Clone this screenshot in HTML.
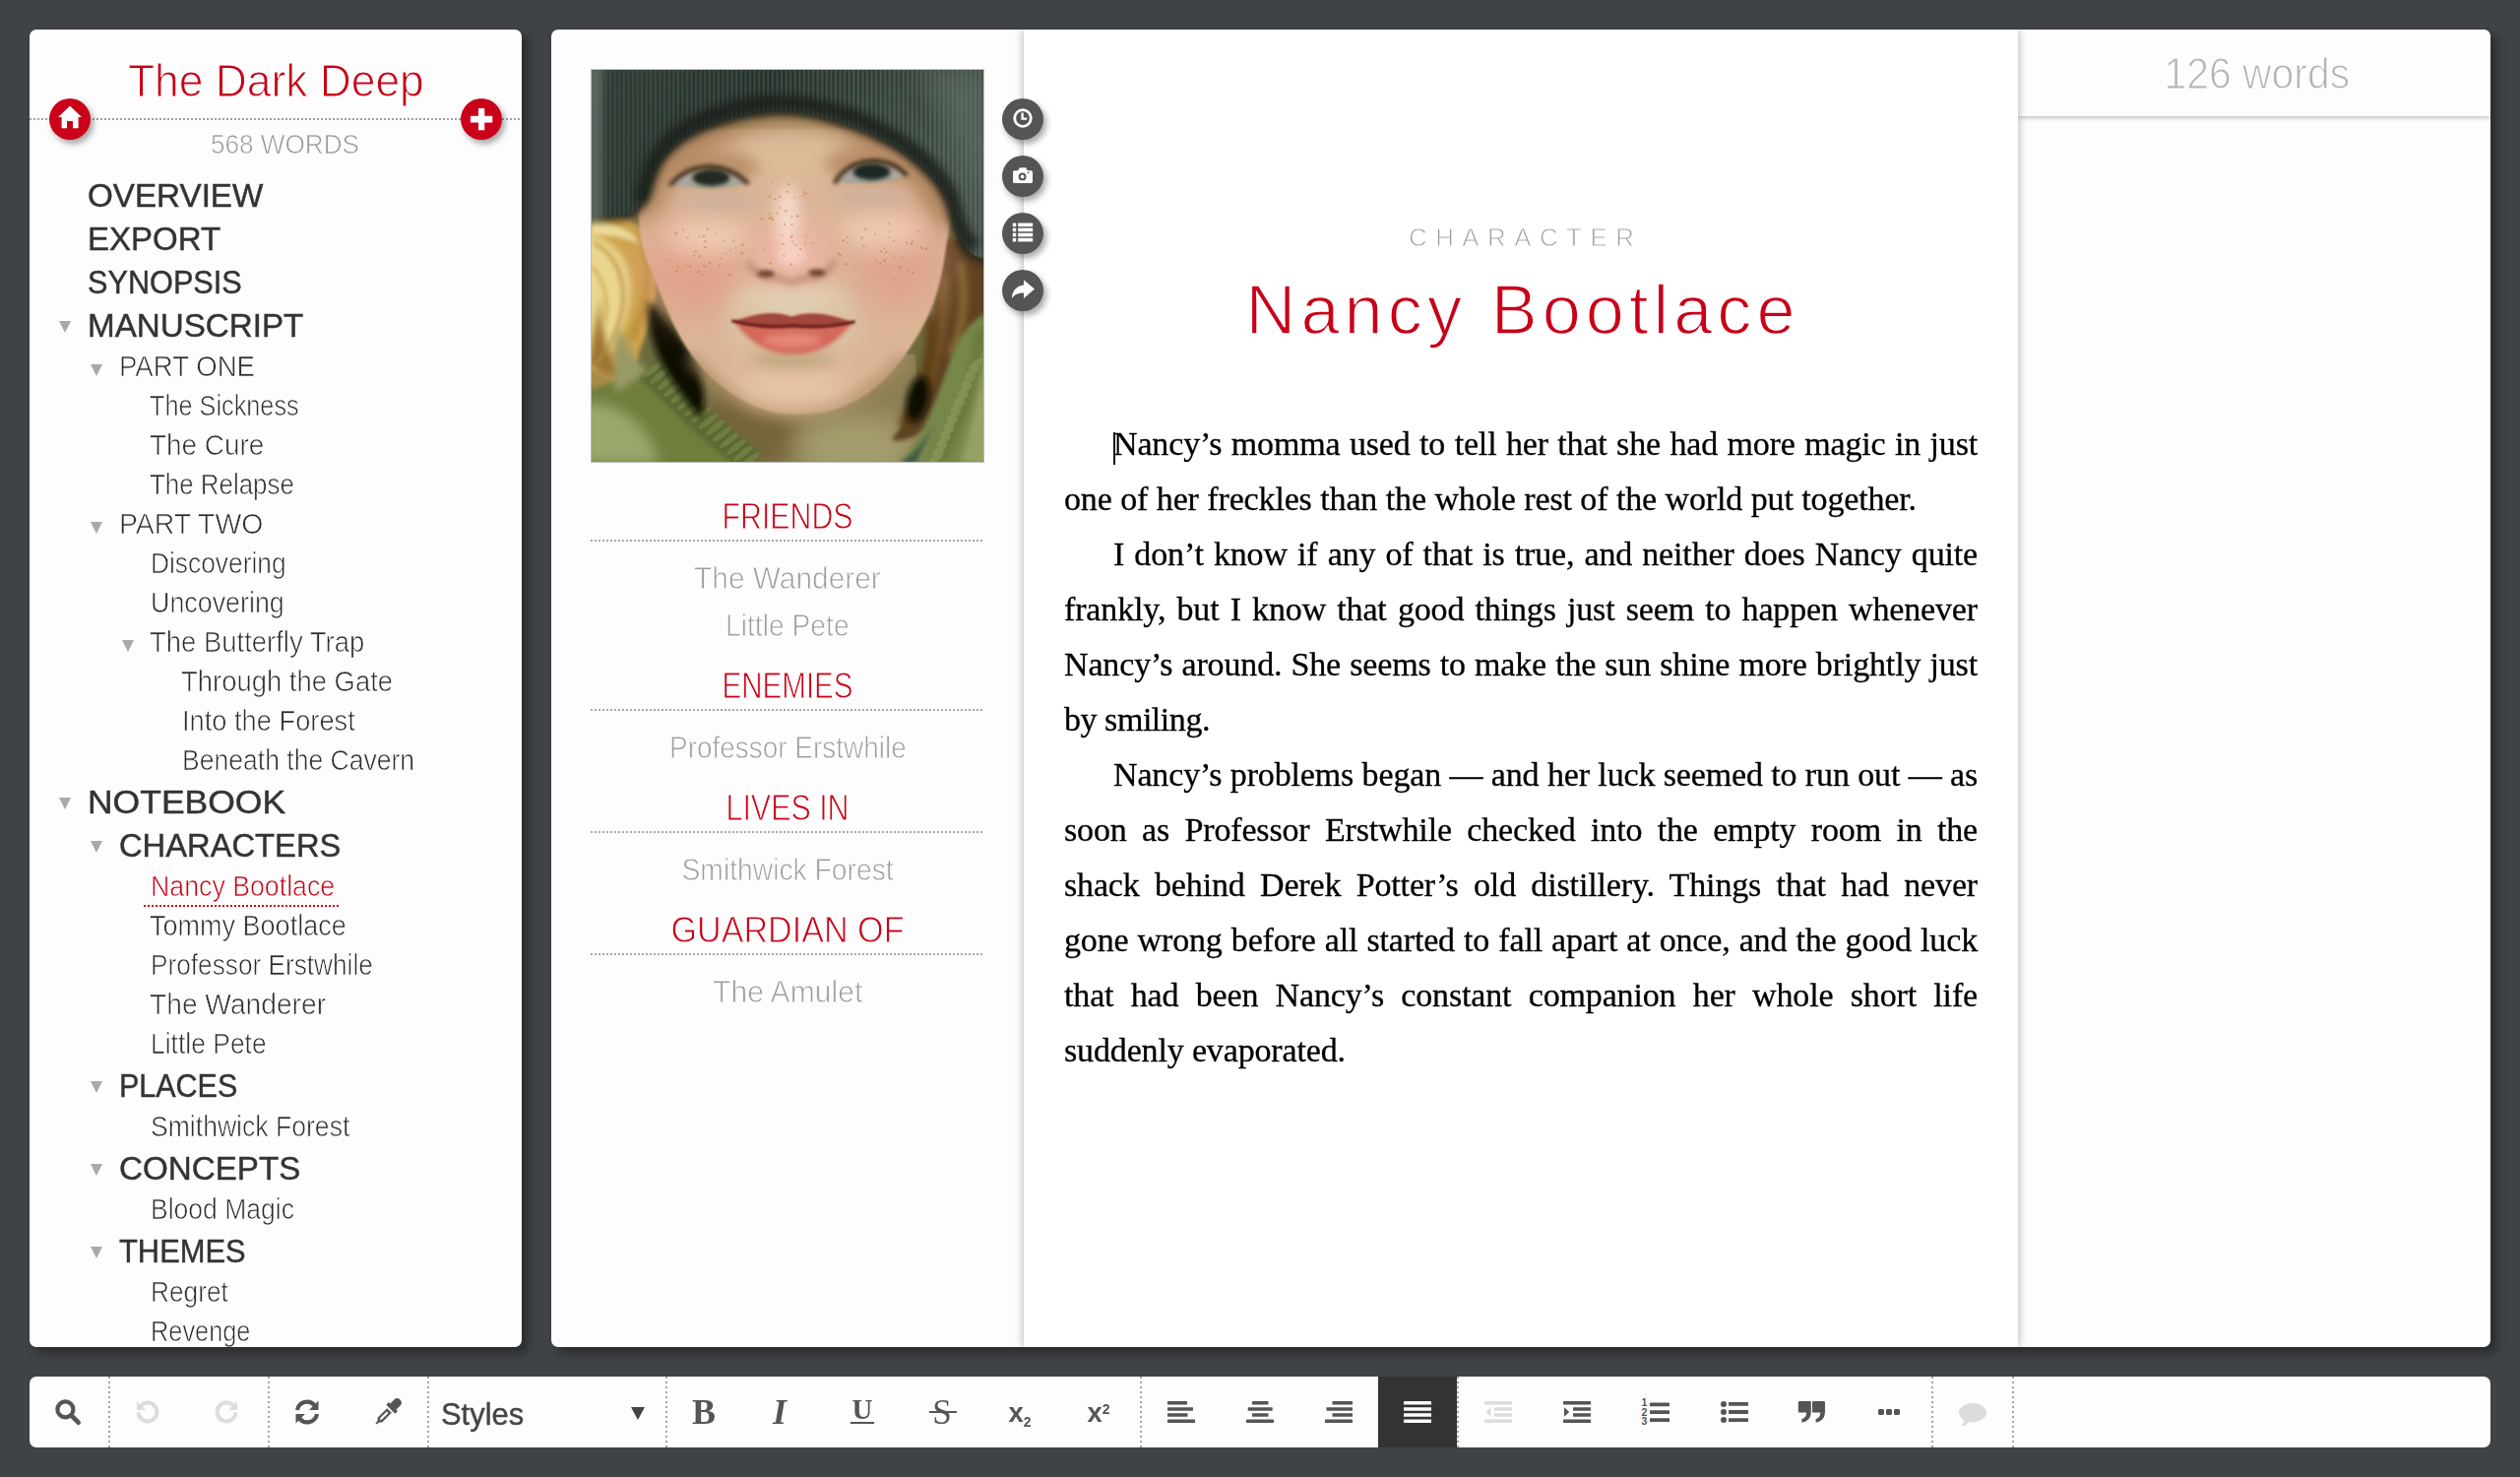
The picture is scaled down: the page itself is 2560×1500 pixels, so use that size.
<!DOCTYPE html>
<html lang="en">
<head>
<meta charset="utf-8">
<title>The Dark Deep — Nancy Bootlace</title>
<style>

html,body{margin:0;padding:0}
html{overflow:hidden;background:#3f4246}
body{width:2560px;height:1500px;background:#3f4246;position:relative;overflow:hidden;
 font-family:"Liberation Sans",sans-serif;color:#333;-webkit-font-smoothing:antialiased}
ul,li,h1,h2,h3,p{margin:0;padding:0;list-style:none;font-weight:normal}
a{display:block;text-decoration:none;color:inherit}
i{font-style:normal}
.panel{position:absolute;background:#fdfdfd;border-radius:7px;box-shadow:6px 6px 10px rgba(0,0,0,.34)}
.f{display:inline-block;white-space:nowrap;transform:scaleX(var(--k));transform-origin:0 50%}
.f.c{transform-origin:50% 50%}
.thin{-webkit-text-stroke:.7px #fdfdfd}
#sidebar h1 .thin{-webkit-text-stroke-width:1.1px}
#card h3 .thin{-webkit-text-stroke-width:.9px}
#card li .thin{-webkit-text-stroke-width:.8px}
#info .thin{-webkit-text-stroke-width:1.2px}

/* ---------- sidebar ---------- */
#sidebar{left:30px;top:30px;width:500px;height:1338px;overflow:hidden}
#sidebar h1{position:absolute;left:0;top:28px;width:500px;text-align:center;font-size:47px;line-height:47px;color:#c80018}
#sidebar h1 .f{transform-origin:50% 50%}
#sidebar .rule{position:absolute;left:0;top:90px;width:500px;height:2px;
 background:repeating-linear-gradient(90deg,#a0a0a0 0 2px,transparent 2px 4px)}
#sidebar .count{position:absolute;left:184px;top:104px;font-size:27px;line-height:27px;color:#999}
.rb{position:absolute;z-index:3;width:42px;height:42px;border-radius:50%;box-shadow:3px 4px 6px rgba(0,0,0,.35)}
.rb svg{position:absolute;left:0;top:0;width:42px;height:42px}
.rb.red{background:#cb0019}
.rb.dark{background:#555}
.rb.dark svg{top:-1px}
.tree{position:absolute;left:0;top:147px;width:500px}
.tree li{position:relative;box-sizing:border-box;white-space:nowrap}
.tree li.h{height:44px;line-height:44px;font-size:33px;color:#333;-webkit-text-stroke:.45px #333}
.tree li.l{height:40px;line-height:38px;font-size:29.6px;color:#2c2c2c}
.tree .tri{position:absolute;top:17px;width:0;height:0;border-left:6.5px solid transparent;border-right:6.5px solid transparent;border-top:12px solid #a9a9a9}
.tree .sel{color:#c80018}
.tree .selrule{position:absolute;left:116px;top:38px;width:198px;height:2px;
 background:repeating-linear-gradient(90deg,#c80018 0 2px,transparent 2px 4px)}

/* ---------- document panel ---------- */
#doc{left:560px;top:30px;width:1970px;height:1338px;overflow:hidden}
#card{position:absolute;left:0;top:0;width:480px;height:1338px}
#card .photo{position:absolute;left:40px;top:40px;width:398px;height:398px;border:1px solid #b9bdb6;background:#7a7f5c}
#card .photo svg{display:block;width:398px;height:398px}
#card .rel{position:absolute;left:40px;top:469px;width:400px;text-align:center}
#card h3{height:50px;line-height:51px;font-size:36px;color:#c80018}
#card ul{padding:12px 0;border-top:0;position:relative}
#card ul::before{content:"";display:block;position:absolute;left:0;top:-3px;width:400px;height:2px;
 background:repeating-linear-gradient(90deg,#a8a8a8 0 2px,transparent 2px 4px)}
#card ul{margin-top:2px}
#card li{height:48px;line-height:48px;font-size:30.5px;color:#9d9d9d}

#editor{position:absolute;z-index:2;left:480px;top:0;width:1010px;height:1338px;background:#fff;box-shadow:0 0 9px rgba(0,0,0,.33)}
#editor .kind{position:absolute;left:0;top:198px;width:1010px;text-align:center;font-size:26px;line-height:26px;color:#9c9c9c}
#editor .kind .f{letter-spacing:8.5px;padding-left:8.5px;-webkit-text-stroke:.9px #fff}
#editor h2{position:absolute;left:0;top:250px;width:1010px;text-align:center;font-size:70px;line-height:70px;color:#c80018}
#editor h2 .f{letter-spacing:5px;padding-left:5px;-webkit-text-stroke:1.6px #fff}
#editor p{position:relative;left:41px;font-family:"Liberation Serif",serif;font-size:34px;line-height:56px;color:#000;-webkit-text-stroke:.3px #000}
#editor p:first-of-type{margin-top:393px}
#editor p,.tree li.h,#toolbar .styles,#toolbar .tb b,#editor .kind{filter:grayscale(1)}
#editor .ln{display:table;white-space:nowrap;letter-spacing:-.15px}
#editor .caret{position:absolute;left:91px;top:409px;width:2px;height:33px;background:#111}

#info{position:absolute;left:1490px;top:0;width:480px;height:1338px}
#info header{height:88px;box-shadow:0 1px 5px rgba(0,0,0,.3);text-align:center;font-size:45px;line-height:45px;color:#b4b4b4;background:#fdfdfd}
#info header .f{margin-top:22px;margin-left:6px}

/* ---------- toolbar ---------- */
#toolbar{position:absolute;left:30px;top:1398px;width:2500px;height:72px;background:#fdfdfd;border-radius:7px;overflow:hidden}
#toolbar .sep{position:absolute;top:0;width:2px;height:72px;background:repeating-linear-gradient(180deg,#a4a4a4 0 2px,transparent 2px 5px)}
#toolbar .tb{position:absolute;top:0;width:80px;height:72px;color:#555;fill:#555;text-align:center}
#toolbar .tb svg{position:absolute;left:50%;top:36px;transform:translate(-50%,-50%);overflow:visible}
#toolbar .tb.dis{fill:#dcdcdc;color:#dcdcdc}
#toolbar .tb.on{background:#333;fill:#fdfdfd}
#toolbar .tb b{position:absolute;left:0;width:80px;text-align:center}
.tB{font:bold 36px/36px "Liberation Serif",serif;top:18px}
.tI{font:italic bold 36px/36px "Liberation Serif",serif;top:18px}
.tU{font:bold 29px/29px "Liberation Serif",serif;top:19px}
.tU::after{content:"";position:absolute;left:28px;top:27px;width:24px;height:2px;background:#555}
.tS{font:normal 35px/35px "Liberation Serif",serif;top:19px}
.tS::after{content:"";position:absolute;left:27px;top:16px;width:28px;height:2px;background:#555}
.tX{font:bold 27.5px/28px "Liberation Sans",sans-serif;top:23px}
.tX sub,.tX sup{font-size:14px;line-height:0}
.tX sub{vertical-align:-4.5px}
.tX sup{vertical-align:8.5px}
#toolbar .styles{position:absolute;left:418px;top:22px;font-size:32px;line-height:32px;color:#444;-webkit-text-stroke:.4px #444}
#toolbar .dd{position:absolute;left:193px;top:9px;width:0;height:0;border-left:7px solid transparent;border-right:7px solid transparent;border-top:13px solid #444}

</style>
</head>
<body>
<nav id="sidebar" class="panel">
<h1><span class="f thin" style="--k:0.944;">The Dark Deep</span></h1>
<div class="rule"></div>
<a class="rb red" style="left:20px;top:70px"><svg width="42" height="42" viewBox="0 0 42 42"><path fill="#fff" d="M21 7.5 L33 19 H29.6 V30.2 H24 V23.1 H18 V30.2 H12.6 V19 H9.1 Z"/></svg></a>
<a class="rb red" style="left:438px;top:70px"><svg width="42" height="42" viewBox="0 0 42 42"><path fill="#fff" d="M18 10 h6.3 v7.7 h8 v6.8 h-8 v7.7 h-6.3 v-7.7 h-8 v-6.8 h8 z"/></svg></a>
<div class="count"><span class="f thin" style="--k:0.968;">568 WORDS</span></div>
<ul class="tree">
<li class="h" style="padding-left:59px"><span class="f" style="--k:1.006;">OVERVIEW</span></li>
<li class="h" style="padding-left:59px"><span class="f" style="--k:1.000;">EXPORT</span></li>
<li class="h" style="padding-left:59px"><span class="f" style="--k:0.929;">SYNOPSIS</span></li>
<li class="h" style="padding-left:59px"><i class="tri" style="left:30px"></i><span class="f" style="--k:1.005;">MANUSCRIPT</span></li>
<li class="l" style="padding-left:91px"><i class="tri" style="left:62px"></i><span class="f thin" style="--k:0.932;">PART ONE</span></li>
<li class="l" style="padding-left:122px"><span class="f thin" style="--k:0.854;">The Sickness</span></li>
<li class="l" style="padding-left:122px"><span class="f thin" style="--k:0.943;">The Cure</span></li>
<li class="l" style="padding-left:122px"><span class="f thin" style="--k:0.875;">The Relapse</span></li>
<li class="l" style="padding-left:91px"><i class="tri" style="left:62px"></i><span class="f thin" style="--k:0.961;">PART TWO</span></li>
<li class="l" style="padding-left:123px"><span class="f thin" style="--k:0.890;">Discovering</span></li>
<li class="l" style="padding-left:123px"><span class="f thin" style="--k:0.907;">Uncovering</span></li>
<li class="l" style="padding-left:122px"><i class="tri" style="left:94px"></i><span class="f thin" style="--k:0.928;">The Butterfly Trap</span></li>
<li class="l" style="padding-left:154px"><span class="f thin" style="--k:0.927;">Through the Gate</span></li>
<li class="l" style="padding-left:155px"><span class="f thin" style="--k:0.921;">Into the Forest</span></li>
<li class="l" style="padding-left:155px"><span class="f thin" style="--k:0.897;">Beneath the Cavern</span></li>
<li class="h" style="padding-left:59px"><i class="tri" style="left:30px"></i><span class="f" style="--k:1.075;">NOTEBOOK</span></li>
<li class="h" style="padding-left:91px"><i class="tri" style="left:62px"></i><span class="f" style="--k:0.991;">CHARACTERS</span></li>
<li class="l" style="padding-left:123px"><i class="selrule"></i><span class="f thin sel" style="--k:0.903;">Nancy Bootlace</span></li>
<li class="l" style="padding-left:122px"><span class="f thin" style="--k:0.913;">Tommy Bootlace</span></li>
<li class="l" style="padding-left:123px"><span class="f thin" style="--k:0.886;">Professor Erstwhile</span></li>
<li class="l" style="padding-left:122px"><span class="f thin" style="--k:0.952;">The Wanderer</span></li>
<li class="l" style="padding-left:123px"><span class="f thin" style="--k:0.894;">Little Pete</span></li>
<li class="h" style="padding-left:91px"><i class="tri" style="left:62px"></i><span class="f" style="--k:0.923;">PLACES</span></li>
<li class="l" style="padding-left:123px"><span class="f thin" style="--k:0.898;">Smithwick Forest</span></li>
<li class="h" style="padding-left:91px"><i class="tri" style="left:62px"></i><span class="f" style="--k:1.005;">CONCEPTS</span></li>
<li class="l" style="padding-left:123px"><span class="f thin" style="--k:0.896;">Blood Magic</span></li>
<li class="h" style="padding-left:91px"><i class="tri" style="left:62px"></i><span class="f" style="--k:0.935;">THEMES</span></li>
<li class="l" style="padding-left:123px"><span class="f thin" style="--k:0.888;">Regret</span></li>
<li class="l" style="padding-left:123px"><span class="f thin" style="--k:0.856;">Revenge</span></li>
</ul>
</nav>
<section id="doc" class="panel">
<aside id="card">
<div class="photo"><svg viewBox="0 0 400 400" preserveAspectRatio="none">
<defs>
<filter id="b1" filterUnits="userSpaceOnUse" x="-80" y="-80" width="560" height="560"><feGaussianBlur stdDeviation="1.2"/></filter>
<filter id="b2" filterUnits="userSpaceOnUse" x="-80" y="-80" width="560" height="560"><feGaussianBlur stdDeviation="2.2"/></filter>
<filter id="b4" filterUnits="userSpaceOnUse" x="-80" y="-80" width="560" height="560"><feGaussianBlur stdDeviation="4"/></filter>
<filter id="b7" filterUnits="userSpaceOnUse" x="-80" y="-80" width="560" height="560"><feGaussianBlur stdDeviation="7"/></filter>
<filter id="b12" filterUnits="userSpaceOnUse" x="-80" y="-80" width="560" height="560"><feGaussianBlur stdDeviation="12"/></filter>
<filter id="b20" filterUnits="userSpaceOnUse" x="-80" y="-80" width="560" height="560"><feGaussianBlur stdDeviation="20"/></filter>
<clipPath id="sq"><rect width="400" height="400"/></clipPath>
<linearGradient id="hatg" x1="0" y1="0" x2="1" y2="0.25"><stop offset="0" stop-color="#35413a"/><stop offset=".45" stop-color="#2b352f"/><stop offset=".8" stop-color="#3d4a42"/><stop offset="1" stop-color="#4d5a51"/></linearGradient>
<pattern id="knit" width="4.6" height="8" patternUnits="userSpaceOnUse"><rect x="0" y="0" width="1.5" height="8" fill="#8fa094" opacity=".32"/><rect x="2.6" y="0" width="1.1" height="8" fill="#121a15" opacity=".30"/></pattern>
<radialGradient id="knitm" cx=".62" cy=".22" r=".75"><stop offset="0" stop-color="#fff" stop-opacity="1"/><stop offset=".7" stop-color="#fff" stop-opacity=".45"/><stop offset="1" stop-color="#fff" stop-opacity=".15"/></radialGradient>
<mask id="km"><rect width="400" height="400" fill="url(#knitm)"/></mask>
<path id="hatp" d="M-10 -10 H410 V196 L392 190 C384 186 378 178 374 164 C371 150 369 141 365 133 C358 119 348 107 335 96 C322 85 312 78 300 72 C280 62 262 55 240 49 C225 45 212 43 198 42 C180 42 164 44 148 48 C132 52 118 57 106 63 C94 69 86 75 78 83 C68 93 62 105 58 118 C55 128 54 137 48 142 C40 148 26 151 10 150 L-10 149 Z"/>
<path id="facep" d="M50 60 L48 150 C49 175 54 190 61 205 C67 220 72 234 78 247 C86 266 95 282 106 296 C118 312 134 326 152 336 C168 345 184 350 200 351 C216 352 232 351 246 347 C262 342 274 336 286 327 C298 318 308 307 318 294 C328 280 338 264 345 248 C352 232 356 216 359 200 C362 180 366 160 368 140 L366 60 Z"/>
</defs>
<g clip-path="url(#sq)">
<rect width="400" height="400" fill="#6d6a3f"/>
<!-- neck -->
<path d="M100 290 L330 290 L340 400 L110 400 Z" fill="#8d7f55"/>
<ellipse cx="150" cy="372" rx="60" ry="45" fill="#75653c" filter="url(#b12)"/>
<ellipse cx="270" cy="385" rx="60" ry="34" fill="#a39b6c" filter="url(#b12)"/>
<!-- left hair -->
<path d="M-10 140 C20 142 48 150 60 175 C72 205 66 240 56 268 C48 290 40 310 42 334 L-10 350 Z" fill="#cda44e" filter="url(#b2)"/>
<path d="M-10 165 C18 170 40 190 40 222 C40 258 22 286 8 306 L-10 320 Z" fill="#ead78f" filter="url(#b4)"/>
<path d="M0 152 C25 156 44 164 52 180 C40 172 20 168 0 168 Z" fill="#eddc98" filter="url(#b2)"/>
<path d="M50 170 C64 200 58 240 40 275" fill="none" stroke="#b98a38" stroke-width="7" filter="url(#b4)"/>
<path d="M10 230 C8 262 14 296 40 318 C28 318 10 312 -4 300 Z" fill="#9c7430" filter="url(#b4)"/>
<path d="M-10 300 C10 306 28 318 42 334 L-10 352 Z" fill="#a68a46" filter="url(#b4)"/>
<path d="M2 176 C20 186 34 206 32 236 C30 262 18 284 4 300" fill="none" stroke="#b98d3c" stroke-width="4" filter="url(#b2)" opacity=".7"/>
<path d="M0 200 C12 214 18 232 14 256" fill="none" stroke="#c69a44" stroke-width="3" filter="url(#b2)" opacity=".7"/>
<!-- right hair -->
<path d="M352 170 L410 176 L410 330 C392 330 372 340 352 358 C336 372 322 380 306 378 C326 352 340 322 346 290 C350 262 352 220 352 170 Z" fill="#5e4220" filter="url(#b2)"/>
<path d="M376 196 C384 230 380 262 366 292" fill="none" stroke="#9a7a3a" stroke-width="5" filter="url(#b4)"/>
<path d="M360 210 C362 250 356 285 340 322" fill="none" stroke="#7a5828" stroke-width="8" filter="url(#b4)"/>
<path d="M346 250 C350 290 340 330 318 364" fill="none" stroke="#5f4018" stroke-width="12" filter="url(#b4)"/>
<ellipse cx="333" cy="336" rx="11" ry="24" fill="#0f0a04" filter="url(#b4)" transform="rotate(12 333 336)"/>
<!-- jacket right -->
<path d="M410 246 C396 250 380 262 370 286 C360 312 352 340 338 366 C330 382 322 392 312 402 L410 402 Z" fill="#77874a" filter="url(#b2)"/>
<path d="M410 250 C400 300 392 350 376 402 L410 402 Z" fill="#94a364" filter="url(#b4)"/>
<path d="M398 262 C392 310 380 352 356 398" fill="none" stroke="#66763a" stroke-width="10" filter="url(#b4)" opacity=".8"/>
<g fill="#9aa868" opacity=".45"><ellipse cx="392.0" cy="300.0" rx="9" ry="3.1" transform="rotate(-38 392.0 300.0)"/><ellipse cx="388.4" cy="308.7" rx="9" ry="3.1" transform="rotate(-38 388.4 308.7)"/><ellipse cx="384.7" cy="317.5" rx="9" ry="3.1" transform="rotate(-38 384.7 317.5)"/><ellipse cx="381.1" cy="326.2" rx="9" ry="3.1" transform="rotate(-38 381.1 326.2)"/><ellipse cx="377.5" cy="334.9" rx="9" ry="3.1" transform="rotate(-38 377.5 334.9)"/><ellipse cx="373.8" cy="343.6" rx="9" ry="3.1" transform="rotate(-38 373.8 343.6)"/><ellipse cx="370.2" cy="352.4" rx="9" ry="3.1" transform="rotate(-38 370.2 352.4)"/><ellipse cx="366.5" cy="361.1" rx="9" ry="3.1" transform="rotate(-38 366.5 361.1)"/><ellipse cx="362.9" cy="369.8" rx="9" ry="3.1" transform="rotate(-38 362.9 369.8)"/><ellipse cx="359.3" cy="378.5" rx="9" ry="3.1" transform="rotate(-38 359.3 378.5)"/><ellipse cx="355.6" cy="387.3" rx="9" ry="3.1" transform="rotate(-38 355.6 387.3)"/><ellipse cx="352.0" cy="396.0" rx="9" ry="3.1" transform="rotate(-38 352.0 396.0)"/></g>
<path d="M316 402 C330 390 340 378 350 362 L330 402 Z" fill="#3f5a4a" filter="url(#b2)"/>
<!-- jacket left -->
<path d="M-10 330 C10 322 30 318 44 304 C52 300 60 302 68 312 C100 350 130 380 168 402 L-10 402 Z" fill="#6e7e3c" filter="url(#b2)"/>
<path d="M-10 340 C10 338 30 344 48 362 C60 376 66 390 70 402 L-10 402 Z" fill="#99a96c" filter="url(#b7)"/>
<path d="M28 262 C36 280 44 296 56 308 C44 316 34 324 24 330 C22 310 22 285 28 262 Z" fill="#9a9a66" filter="url(#b4)"/>
<path d="M58 306 C92 338 124 372 164 400" fill="none" stroke="#5b6a32" stroke-width="26" filter="url(#b2)"/>
<g fill="#7f8e4d" opacity=".55"><ellipse cx="62.0" cy="306.0" rx="12" ry="3.1" transform="rotate(-38 62.0 306.0)"/><ellipse cx="69.1" cy="312.6" rx="12" ry="3.1" transform="rotate(-38 69.1 312.6)"/><ellipse cx="76.3" cy="319.1" rx="12" ry="3.1" transform="rotate(-38 76.3 319.1)"/><ellipse cx="83.4" cy="325.7" rx="12" ry="3.1" transform="rotate(-38 83.4 325.7)"/><ellipse cx="90.6" cy="332.3" rx="12" ry="3.1" transform="rotate(-38 90.6 332.3)"/><ellipse cx="97.7" cy="338.9" rx="12" ry="3.1" transform="rotate(-38 97.7 338.9)"/><ellipse cx="104.9" cy="345.4" rx="12" ry="3.1" transform="rotate(-38 104.9 345.4)"/><ellipse cx="112.0" cy="352.0" rx="12" ry="3.1" transform="rotate(-38 112.0 352.0)"/><ellipse cx="119.1" cy="358.6" rx="12" ry="3.1" transform="rotate(-38 119.1 358.6)"/><ellipse cx="126.3" cy="365.1" rx="12" ry="3.1" transform="rotate(-38 126.3 365.1)"/><ellipse cx="133.4" cy="371.7" rx="12" ry="3.1" transform="rotate(-38 133.4 371.7)"/><ellipse cx="140.6" cy="378.3" rx="12" ry="3.1" transform="rotate(-38 140.6 378.3)"/><ellipse cx="147.7" cy="384.9" rx="12" ry="3.1" transform="rotate(-38 147.7 384.9)"/><ellipse cx="154.9" cy="391.4" rx="12" ry="3.1" transform="rotate(-38 154.9 391.4)"/><ellipse cx="162.0" cy="398.0" rx="12" ry="3.1" transform="rotate(-38 162.0 398.0)"/></g>
<!-- dark shadow left of jaw -->
<path d="M58 236 C72 246 96 280 110 304 C116 322 116 340 112 356 C100 344 84 322 72 300 C62 280 56 258 58 236 Z" fill="#0f0b05" filter="url(#b4)"/>
<!-- face -->
<use href="#facep" fill="#dcb597" filter="url(#b1)"/>
<!-- under-jaw shading -->
<path d="M100 292 C130 330 165 347 200 350 C240 352 285 335 320 292" fill="none" stroke="#a98a62" stroke-width="10" filter="url(#b7)" opacity=".9"/>
<!-- forehead shade from hat -->
<path d="M50 150 C56 110 80 84 110 66 C150 48 240 44 300 74 C340 96 362 130 368 160" fill="none" stroke="#a47c52" stroke-width="34" filter="url(#b12)" opacity=".95"/>
<ellipse cx="205" cy="84" rx="62" ry="24" fill="#dcbb98" filter="url(#b12)"/>
<!-- cheeks -->
<ellipse cx="104" cy="206" rx="50" ry="44" fill="#e39a86" filter="url(#b20)" opacity=".75"/>
<ellipse cx="312" cy="200" rx="46" ry="44" fill="#e09c8a" filter="url(#b20)" opacity=".75"/>
<ellipse cx="118" cy="170" rx="44" ry="20" fill="#f0cdb4" filter="url(#b12)" opacity=".9"/>
<ellipse cx="296" cy="165" rx="44" ry="20" fill="#f0cdb4" filter="url(#b12)" opacity=".9"/>
<!-- pale muzzle + chin -->
<ellipse cx="204" cy="238" rx="60" ry="22" fill="#e2cfb4" filter="url(#b12)"/>
<ellipse cx="160" cy="262" rx="22" ry="26" fill="#d9c6a6" filter="url(#b12)" opacity=".85"/>
<ellipse cx="252" cy="262" rx="22" ry="26" fill="#d9c6a6" filter="url(#b12)" opacity=".85"/>
<ellipse cx="205" cy="322" rx="56" ry="22" fill="#e6c3a6" filter="url(#b12)"/>
<ellipse cx="205" cy="296" rx="44" ry="9" fill="#b9a47c" filter="url(#b7)" opacity=".8"/>
<!-- eye sockets -->
<ellipse cx="124" cy="100" rx="46" ry="18" fill="#b38a64" filter="url(#b7)" opacity=".85"/>
<ellipse cx="284" cy="96" rx="46" ry="18" fill="#b38a64" filter="url(#b7)" opacity=".85"/>
<ellipse cx="128" cy="134" rx="40" ry="10" fill="#cbb0a0" filter="url(#b7)" opacity=".8"/>
<ellipse cx="284" cy="130" rx="40" ry="10" fill="#cbb0a0" filter="url(#b7)" opacity=".8"/>
<!-- eyes -->
<path d="M82 117 C98 100 128 92 158 116 C138 122 104 122 82 117 Z" fill="#a9a79c" filter="url(#b1)"/>
<ellipse cx="122" cy="110" rx="19" ry="8.5" fill="#222a24" filter="url(#b2)"/>
<path d="M80 118 C98 96 132 90 160 116" fill="none" stroke="#2a1a0e" stroke-width="3.6" filter="url(#b2)"/>
<path d="M250 114 C262 92 300 88 320 108 C300 116 270 118 250 114 Z" fill="#a9a79c" filter="url(#b1)"/>
<ellipse cx="286" cy="104" rx="19" ry="8.5" fill="#1f2620" filter="url(#b2)"/>
<path d="M248 116 C260 90 302 84 322 108" fill="none" stroke="#2a1a0e" stroke-width="3.6" filter="url(#b2)"/>
<!-- nose -->
<ellipse cx="204" cy="186" rx="36" ry="30" fill="#eeb6a6" filter="url(#b12)"/>
<ellipse cx="200" cy="150" rx="12" ry="34" fill="#f6d9ca" filter="url(#b7)"/>
<ellipse cx="204" cy="188" rx="14" ry="12" fill="#f7cfc2" filter="url(#b4)"/>
<path d="M160 196 C166 210 180 214 192 212 C200 218 210 218 216 212 C228 214 242 210 248 194" fill="none" stroke="#b07862" stroke-width="5" filter="url(#b4)" opacity=".85"/>
<ellipse cx="178" cy="208" rx="9" ry="3.6" fill="#6e3c2c" filter="url(#b2)"/>
<ellipse cx="230" cy="207" rx="9" ry="3.6" fill="#6e3c2c" filter="url(#b2)"/>
<!-- mouth -->
<path d="M146 257 C168 250 188 248 204 254 C220 248 242 250 266 258 C252 278 232 290 205 290 C180 290 160 278 146 257 Z" fill="#d4685a" filter="url(#b2)"/>
<path d="M146 257 C168 248 188 246 204 252 C220 246 242 248 266 258 C244 264 222 264 205 262 C188 264 166 264 146 257 Z" fill="#a2463c" filter="url(#b1)"/>
<path d="M143 256 C166 262 186 263 205 261 C224 263 246 262 269 257" fill="none" stroke="#6a241c" stroke-width="3.2" filter="url(#b1)"/>
<ellipse cx="205" cy="276" rx="30" ry="7" fill="#e68878" filter="url(#b4)"/>
<g fill="#c47a3c" opacity=".55"><circle cx="195.7" cy="177.9" r="1.1"/><circle cx="218.5" cy="178.6" r="0.9"/><circle cx="218.7" cy="175.7" r="0.7"/><circle cx="194.4" cy="168.7" r="0.8"/><circle cx="176.2" cy="183.3" r="0.8"/><circle cx="203.8" cy="198.5" r="1.3"/><circle cx="184.8" cy="153.0" r="1.3"/><circle cx="226.2" cy="176.8" r="0.9"/><circle cx="205.1" cy="174.8" r="0.9"/><circle cx="204.3" cy="150.2" r="1.0"/><circle cx="189.3" cy="145.9" r="1.0"/><circle cx="205.1" cy="168.2" r="0.8"/><circle cx="192.4" cy="140.5" r="0.9"/><circle cx="184.0" cy="150.7" r="0.9"/><circle cx="206.7" cy="130.1" r="0.8"/><circle cx="181.8" cy="151.2" r="1.2"/><circle cx="198.2" cy="143.9" r="1.3"/><circle cx="213.1" cy="183.0" r="1.2"/><circle cx="211.3" cy="188.9" r="0.7"/><circle cx="187.4" cy="131.6" r="1.0"/><circle cx="210.6" cy="149.2" r="1.1"/><circle cx="182.1" cy="146.9" r="1.0"/><circle cx="215.5" cy="128.3" r="1.0"/><circle cx="197.1" cy="157.8" r="1.1"/><circle cx="182.0" cy="129.2" r="1.2"/><circle cx="196.3" cy="189.8" r="1.1"/><circle cx="218.7" cy="169.0" r="0.8"/><circle cx="204.1" cy="170.5" r="1.2"/><circle cx="208.9" cy="179.1" r="0.9"/><circle cx="204.6" cy="157.8" r="1.0"/><circle cx="173.5" cy="152.2" r="1.2"/><circle cx="209.1" cy="149.2" r="0.9"/><circle cx="182.4" cy="197.4" r="1.3"/><circle cx="206.2" cy="177.9" r="0.8"/><circle cx="113.2" cy="209.3" r="1.1"/><circle cx="109.9" cy="191.1" r="1.0"/><circle cx="86.8" cy="205.6" r="1.3"/><circle cx="98.2" cy="171.2" r="1.1"/><circle cx="106.3" cy="185.3" r="1.2"/><circle cx="118.3" cy="162.8" r="1.2"/><circle cx="88.4" cy="200.8" r="0.8"/><circle cx="104.0" cy="185.8" r="0.7"/><circle cx="114.1" cy="199.7" r="0.9"/><circle cx="110.3" cy="190.1" r="0.8"/><circle cx="131.0" cy="199.7" r="0.7"/><circle cx="135.2" cy="174.1" r="0.8"/><circle cx="109.6" cy="205.9" r="0.9"/><circle cx="141.2" cy="209.0" r="1.3"/><circle cx="79.7" cy="194.1" r="0.8"/><circle cx="130.2" cy="199.4" r="0.9"/><circle cx="117.6" cy="181.2" r="0.7"/><circle cx="141.2" cy="183.8" r="0.8"/><circle cx="104.7" cy="189.1" r="1.0"/><circle cx="153.5" cy="186.3" r="1.1"/><circle cx="108.2" cy="206.4" r="0.8"/><circle cx="114.5" cy="169.6" r="1.2"/><circle cx="100.6" cy="200.7" r="1.2"/><circle cx="153.4" cy="187.4" r="1.2"/><circle cx="126.7" cy="167.2" r="0.8"/><circle cx="84.3" cy="188.2" r="0.7"/><circle cx="132.0" cy="192.4" r="0.9"/><circle cx="93.5" cy="162.7" r="1.0"/><circle cx="154.0" cy="178.5" r="1.3"/><circle cx="97.2" cy="199.1" r="0.8"/><circle cx="116.1" cy="200.9" r="1.1"/><circle cx="145.0" cy="174.2" r="1.0"/><circle cx="86.0" cy="168.5" r="0.8"/><circle cx="85.8" cy="166.0" r="1.2"/><circle cx="110.0" cy="170.7" r="0.8"/><circle cx="116.0" cy="175.0" r="1.2"/><circle cx="137.1" cy="187.0" r="0.9"/><circle cx="147.4" cy="181.9" r="0.8"/><circle cx="120.8" cy="196.9" r="1.2"/><circle cx="115.3" cy="181.1" r="1.2"/><circle cx="337.0" cy="182.1" r="0.9"/><circle cx="286.5" cy="182.3" r="0.7"/><circle cx="336.4" cy="180.8" r="1.0"/><circle cx="326.6" cy="177.6" r="1.2"/><circle cx="308.7" cy="174.5" r="0.9"/><circle cx="294.6" cy="197.3" r="1.1"/><circle cx="298.3" cy="202.8" r="0.8"/><circle cx="321.7" cy="176.4" r="1.0"/><circle cx="260.9" cy="170.9" r="1.0"/><circle cx="327.6" cy="175.2" r="1.0"/><circle cx="295.6" cy="184.6" r="1.0"/><circle cx="300.7" cy="186.0" r="1.2"/><circle cx="314.4" cy="201.9" r="1.1"/><circle cx="277.0" cy="179.7" r="1.0"/><circle cx="261.0" cy="176.1" r="0.8"/><circle cx="280.7" cy="180.2" r="0.9"/><circle cx="304.5" cy="165.2" r="1.0"/><circle cx="302.9" cy="156.7" r="1.0"/><circle cx="275.8" cy="172.1" r="1.0"/><circle cx="289.5" cy="167.6" r="1.0"/><circle cx="254.1" cy="189.0" r="1.1"/><circle cx="333.1" cy="164.7" r="0.9"/><circle cx="256.9" cy="174.4" r="1.2"/><circle cx="308.8" cy="191.4" r="1.0"/><circle cx="318.3" cy="190.6" r="0.7"/><circle cx="279.9" cy="162.3" r="1.2"/><circle cx="322.2" cy="205.3" r="1.1"/><circle cx="327.7" cy="206.8" r="1.3"/><circle cx="308.9" cy="213.6" r="0.9"/><circle cx="252.4" cy="187.4" r="1.2"/><circle cx="315.3" cy="200.4" r="1.0"/><circle cx="290.4" cy="194.6" r="0.9"/><circle cx="299.2" cy="182.2" r="1.0"/><circle cx="296.0" cy="186.0" r="0.9"/><circle cx="277.1" cy="170.9" r="0.7"/><circle cx="341.4" cy="182.6" r="1.3"/><circle cx="317.1" cy="193.3" r="0.7"/><circle cx="304.0" cy="171.5" r="0.8"/><circle cx="259.9" cy="198.3" r="1.2"/><circle cx="299.2" cy="194.6" r="1.3"/><circle cx="184.0" cy="114.5" r="0.8"/><circle cx="216.4" cy="124.5" r="1.0"/><circle cx="219.0" cy="126.8" r="1.1"/><circle cx="201.6" cy="116.6" r="1.2"/><circle cx="218.4" cy="126.0" r="1.0"/><circle cx="191.8" cy="129.5" r="1.3"/><circle cx="199.3" cy="124.7" r="1.0"/><circle cx="200.4" cy="124.2" r="0.8"/></g>
<!-- hat -->
<use href="#hatp" fill="#141a15" filter="url(#b4)" transform="translate(0,5)" opacity=".75"/>
<use href="#hatp" fill="url(#hatg)" filter="url(#b1)"/>
<g mask="url(#km)"><use href="#hatp" fill="url(#knit)"/></g>
<path d="M48 142 C54 137 55 128 58 118 C62 105 68 93 78 83 C86 75 94 69 106 63 C132 50 164 42 198 42 C240 44 280 60 312 80 C340 98 360 120 368 142 C372 160 378 182 392 190" fill="none" stroke="#1b231e" stroke-width="16" filter="url(#b4)" transform="translate(0,-9)" opacity=".85"/>
<rect x="-5" y="-5" width="16" height="160" fill="#77857c" filter="url(#b4)" opacity=".55"/>
<path d="M330 0 L400 0 L400 150 C392 110 370 50 330 0 Z" fill="#6e7d74" filter="url(#b12)" opacity=".4"/>
</g>
</svg></div>
<div class="rel">
<h3><span class="f thin c" style="--k:0.842;">FRIENDS</span></h3>
<ul><li><span class="f thin c" style="--k:0.979;">The Wanderer</span></li><li><span class="f thin c" style="--k:0.926;">Little Pete</span></li></ul>
<h3><span class="f thin c" style="--k:0.821;">ENEMIES</span></h3>
<ul><li><span class="f thin c" style="--k:0.916;">Professor Erstwhile</span></li></ul>
<h3><span class="f thin c" style="--k:0.845;">LIVES IN</span></h3>
<ul><li><span class="f thin c" style="--k:0.927;">Smithwick Forest</span></li></ul>
<h3><span class="f thin c" style="--k:0.948;">GUARDIAN OF</span></h3>
<ul><li><span class="f thin c" style="--k:0.987;">The Amulet</span></li></ul>
</div>
</aside>
<article id="editor">
<div class="kind"><span class="f c" style="--k:0.996;">CHARACTER</span></div>
<h2><span class="f thin c" style="--k:1.005;">Nancy Bootlace</span></h2>
<i class="caret"></i>
<p><span class="ln" style="margin-left:50px;word-spacing:1.08px">Nancy’s momma used to tell her that she had more magic in just</span><span class="ln" style="margin-left:0px;word-spacing:0.21px">one of her freckles than the whole rest of the world put together.</span></p>
<p><span class="ln" style="margin-left:50px;word-spacing:1.81px">I don’t know if any of that is true, and neither does Nancy quite</span><span class="ln" style="margin-left:0px;word-spacing:2.87px">frankly, but I know that good things just seem to happen whenever</span><span class="ln" style="margin-left:0px;word-spacing:0.79px">Nancy’s around. She seems to make the sun shine more brightly just</span><span class="ln" style="margin-left:0px;letter-spacing:-0.46px">by smiling.</span></p>
<p><span class="ln" style="margin-left:50px;word-spacing:0.11px">Nancy’s problems began — and her luck seemed to run out — as</span><span class="ln" style="margin-left:0px;word-spacing:7.05px">soon as Professor Erstwhile checked into the empty room in the</span><span class="ln" style="margin-left:0px;word-spacing:7.01px">shack behind Derek Potter’s old distillery. Things that had never</span><span class="ln" style="margin-left:0px;word-spacing:0.73px">gone wrong before all started to fall apart at once, and the good luck</span><span class="ln" style="margin-left:0px;word-spacing:8.98px">that had been Nancy’s constant companion her whole short life</span><span class="ln" style="margin-left:0px;letter-spacing:-0.15px">suddenly evaporated.</span></p>
</article>
<aside id="info"><header><span class="f thin c" style="--k:0.909;">126 words</span></header></aside>
<a class="rb dark" style="left:458px;top:70px"><svg width="42" height="42" viewBox="0 0 42 42"><circle cx="21" cy="21" r="8.3" fill="none" stroke="#fff" stroke-width="2.8"/><path d="M20.6 15.6 v6 h4.6" fill="none" stroke="#fff" stroke-width="2.3"/></svg></a>
<a class="rb dark" style="left:458px;top:128px"><svg width="42" height="42" viewBox="0 0 42 42"><path fill="#fff" d="M12.6 16.2 h3.5 l1.7 -3 h6.4 l1.7 3 h3.5 a1.6 1.6 0 0 1 1.6 1.6 v9.6 a1.6 1.6 0 0 1 -1.6 1.6 h-16.8 a1.6 1.6 0 0 1 -1.6 -1.6 v-9.6 a1.6 1.6 0 0 1 1.6 -1.6 z"/><circle cx="20.6" cy="22.4" r="3.9" fill="#555"/><circle cx="20.6" cy="22.4" r="1.9" fill="#fff"/><circle cx="26.6" cy="18.3" r="0.9" fill="#555"/></svg></a>
<a class="rb dark" style="left:458px;top:186px"><svg width="42" height="42" viewBox="0 0 42 42"><g fill="#fff"><rect x="10.8" y="11.5" width="3.4" height="3.6"/><rect x="16.2" y="11.5" width="15" height="3.6"/><rect x="10.8" y="16.6" width="3.4" height="3.6"/><rect x="16.2" y="16.6" width="15" height="3.6"/><rect x="10.8" y="21.7" width="3.4" height="3.6"/><rect x="16.2" y="21.7" width="15" height="3.6"/><rect x="10.8" y="26.8" width="3.4" height="3.6"/><rect x="16.2" y="26.8" width="15" height="3.6"/></g></svg></a>
<a class="rb dark" style="left:458px;top:244px"><svg width="42" height="42" viewBox="0 0 42 42"><path fill="#fff" d="M22 11.2 L33 20.6 L22 30 V24.6 C16.5 24.6 12.3 26.2 9.9 30.2 C10 23 14.6 17.2 22 16.6 Z"/></svg></a>
</section>
<div id="toolbar">
<a class="tb " style="left:-1px"><svg width="26" height="26" viewBox="0 0 26 26"><circle cx="10.4" cy="10.4" r="8" fill="none" stroke="currentColor" stroke-width="4.2"/><path d="M16.6 16.6 L23.6 23.6" stroke="currentColor" stroke-width="4.8" stroke-linecap="round"/></svg></a>
<i class="sep" style="left:80px"></i>
<a class="tb dis" style="left:80px"><svg width="24" height="24" viewBox="0 0 24 24"><path d="M4.6 6.2 A9.4 9.4 0 1 1 2.6 12.4" fill="none" stroke="currentColor" stroke-width="4"/><path d="M1 1 V10 H10 Z"/></svg></a>
<a class="tb dis" style="left:160px"><svg width="24" height="24" viewBox="0 0 24 24"><g transform="translate(24,0) scale(-1,1)"><path d="M4.6 6.2 A9.4 9.4 0 1 1 2.6 12.4" fill="none" stroke="currentColor" stroke-width="4"/><path d="M1 1 V10 H10 Z"/></g></svg></a>
<i class="sep" style="left:242px"></i>
<a class="tb " style="left:242px"><svg width="26" height="24" viewBox="0 0 26 24"><path d="M3 10 A10 10 0 0 1 20.5 5.2" fill="none" stroke="currentColor" stroke-width="4.2"/><path d="M24.5 0.5 V10 H15 Z"/><path d="M23 14 A10 10 0 0 1 5.5 18.8" fill="none" stroke="currentColor" stroke-width="4.2"/><path d="M1.5 23.5 V14 H11 Z"/></svg></a>
<a class="tb " style="left:324px"><svg width="28" height="28" viewBox="0 0 28 28"><path d="M20.5 1.2 a4.4 4.4 0 0 1 6.2 6.2 l-4.2 4.2 l1.5 1.5 l-2.6 2.6 l-9 -9 l2.6 -2.6 l1.5 1.5 z"/><path d="M13.2 10.2 l4.6 4.6 l-9.6 9.6 h-3 l-2.6 2.2 l-1.2 -1.2 l2.2 -2.6 v-3 z M12.9 13.4 l-6.8 6.8 v1.6 h1.6 l6.8 -6.8 z" fill-rule="evenodd"/></svg></a>
<i class="sep" style="left:404px"></i>
<i class="sep" style="left:646px"></i>
<a class="tb" style="left:645px"><b class="tB">B</b></a>
<a class="tb" style="left:722px"><b class="tI">I</b></a>
<a class="tb" style="left:806px"><b class="tU">U</b></a>
<a class="tb" style="left:887px"><b class="tS">S</b></a>
<a class="tb" style="left:966px"><b class="tX">x<sub>2</sub></b></a>
<a class="tb" style="left:1046px"><b class="tX">x<sup>2</sup></b></a>
<i class="sep" style="left:1128px"></i>
<a class="tb " style="left:1130px"><svg width="28" height="22" viewBox="0 0 28 22"><rect x="0" y="0.00" width="20" height="3.6" rx="0.6"/><rect x="0" y="6.13" width="26" height="3.6" rx="0.6"/><rect x="0" y="12.27" width="20.5" height="3.6" rx="0.6"/><rect x="0" y="18.40" width="28" height="3.6" rx="0.6"/></svg></a>
<a class="tb " style="left:1210px"><svg width="28" height="22" viewBox="0 0 28 22"><rect x="6" y="0.00" width="16.5" height="3.6" rx="0.6"/><rect x="1.7" y="6.13" width="25" height="3.6" rx="0.6"/><rect x="6" y="12.27" width="16.5" height="3.6" rx="0.6"/><rect x="0" y="18.40" width="28" height="3.6" rx="0.6"/></svg></a>
<a class="tb " style="left:1290px"><svg width="28" height="22" viewBox="0 0 28 22"><rect x="7.5" y="0.00" width="20.5" height="3.6" rx="0.6"/><rect x="1.5" y="6.13" width="26.5" height="3.6" rx="0.6"/><rect x="7.5" y="12.27" width="20.5" height="3.6" rx="0.6"/><rect x="0" y="18.40" width="28" height="3.6" rx="0.6"/></svg></a>
<a class="tb on" style="left:1370px"><svg width="28" height="22" viewBox="0 0 28 22"><rect x="0" y="0.00" width="28" height="3.6" rx="0.6"/><rect x="0" y="6.13" width="28" height="3.6" rx="0.6"/><rect x="0" y="12.27" width="28" height="3.6" rx="0.6"/><rect x="0" y="18.40" width="28" height="3.6" rx="0.6"/></svg></a>
<i class="sep" style="left:1450px"></i>
<a class="tb dis" style="left:1452px"><svg width="28" height="22" viewBox="0 0 28 22"><rect x="0" y="0.00" width="28" height="3.6" rx="0.6"/><rect x="10" y="6.13" width="18" height="3.6" rx="0.6"/><rect x="10" y="12.27" width="18" height="3.6" rx="0.6"/><rect x="0" y="18.40" width="28" height="3.6" rx="0.6"/><path d="M6.4 6.3 V15.7 L1.4 11 Z"/></svg></a>
<a class="tb " style="left:1532px"><svg width="28" height="22" viewBox="0 0 28 22"><rect x="0" y="0.00" width="28" height="3.6" rx="0.6"/><rect x="10" y="6.13" width="18" height="3.6" rx="0.6"/><rect x="10" y="12.27" width="18" height="3.6" rx="0.6"/><rect x="0" y="18.40" width="28" height="3.6" rx="0.6"/><path d="M1 6.3 V15.7 L6.2 11 Z"/></svg></a>
<a class="tb " style="left:1612px"><svg width="28" height="28" viewBox="0 0 28 28"><rect x="8" transform="translate(0,4.4)" y="0.00" width="20" height="3.8" rx="0.6"/><rect x="8" transform="translate(0,4.4)" y="7.90" width="20" height="3.8" rx="0.6"/><rect x="8" transform="translate(0,4.4)" y="15.80" width="20" height="3.8" rx="0.6"/><text x="-0.5" y="8" font-family="Liberation Sans, sans-serif" font-weight="bold" font-size="10.5">1</text><text x="-0.5" y="17.6" font-family="Liberation Sans, sans-serif" font-weight="bold" font-size="10.5">2</text><text x="-0.5" y="27.4" font-family="Liberation Sans, sans-serif" font-weight="bold" font-size="10.5">3</text></svg></a>
<a class="tb " style="left:1692px"><svg width="28" height="22" viewBox="0 0 28 22"><rect x="8" transform="translate(0,1)" y="0.00" width="20" height="3.8" rx="0.6"/><rect x="8" transform="translate(0,1)" y="8.10" width="20" height="3.8" rx="0.6"/><rect x="8" transform="translate(0,1)" y="16.20" width="20" height="3.8" rx="0.6"/><circle cx="3" cy="2.9" r="3"/><circle cx="3" cy="11" r="3"/><circle cx="3" cy="19.1" r="3"/></svg></a>
<a class="tb " style="left:1771px"><svg width="26" height="22" viewBox="0 0 26 22"><path id="q" d="M0 0 h10.6 a1.2 1.2 0 0 1 1.2 1.2 v9.4 c0 6.6 -3.6 10.4 -9.4 11 v-3.6 c3 -0.6 4.6 -2.6 4.6 -5.2 v-1.4 h-7 a1.2 1.2 0 0 1 -1.2 -1.2 v-9 a1.2 1.2 0 0 1 1.2 -1.2 z" transform="translate(0,0)"/><path d="M0 0 h10.6 a1.2 1.2 0 0 1 1.2 1.2 v9.4 c0 6.6 -3.6 10.4 -9.4 11 v-3.6 c3 -0.6 4.6 -2.6 4.6 -5.2 v-1.4 h-7 a1.2 1.2 0 0 1 -1.2 -1.2 v-9 a1.2 1.2 0 0 1 1.2 -1.2 z" transform="translate(14.2,0)"/></svg></a>
<a class="tb " style="left:1849px"><svg width="22" height="6" viewBox="0 0 22 6"><rect x="0" y="0" width="6" height="6" rx="1.4"/><rect x="8" y="0" width="6" height="6" rx="1.4"/><rect x="16" y="0" width="6" height="6" rx="1.4"/></svg></a>
<i class="sep" style="left:1932px"></i>
<a class="tb dis" style="left:1934px"><svg width="28" height="24" viewBox="0 0 28 24"><path transform="translate(0,3)" d="M14 0 C21.7 0 28 4.3 28 9.6 C28 14.9 21.7 19.2 14 19.2 C12.9 19.2 11.8 19.1 10.8 18.9 C8.8 21 5.6 23 2 23.4 C3.6 21.6 4.8 19.6 5.2 17.2 C2 15.4 0 12.7 0 9.6 C0 4.3 6.3 0 14 0 Z"/></svg></a>
<i class="sep" style="left:2014px"></i>
<div class="styles"><span class="f" style="--k:0.966;">Styles</span><i class="dd"></i></div>
</div>
</body>
</html>
